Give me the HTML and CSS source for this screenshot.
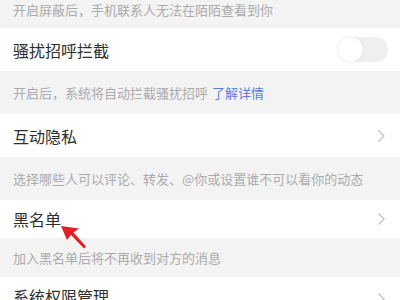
FILE: index.html
```html
<!DOCTYPE html>
<html lang="zh">
<head>
<meta charset="utf-8">
<link rel="stylesheet" href="styles.css">
</head>
<body>
<div class="page">
  <div class="note note-top">开启屏蔽后，手机联系人无法在陌陌查看到你</div>
  <div class="row row-tall">
    <span class="title">骚扰招呼拦截</span>
    <span class="toggle"><span class="knob"></span></span>
  </div>
  <div class="note note-tall">开启后，系统将自动拦截骚扰招呼 <a class="link">了解详情</a></div>
  <div class="row row-tall">
    <span class="title">互动隐私</span>
    <svg class="chev" width="9" height="14" viewBox="0 0 9 14"><path d="M1.5 1.5 L7 7 L1.5 12.5" fill="none" stroke="#c4c4c4" stroke-width="1.4"/></svg>
  </div>
  <div class="note note-tall">选择哪些人可以评论、转发、@你或设置谁不可以看你的动态</div>
  <div class="row row-short">
    <span class="title">黑名单</span>
    <svg class="chev" width="9" height="14" viewBox="0 0 9 14"><path d="M1.5 1.5 L7 7 L1.5 12.5" fill="none" stroke="#c4c4c4" stroke-width="1.4"/></svg>
  </div>
  <div class="note note-short">加入黑名单后将不再收到对方的消息</div>
  <div class="row row-last">
    <span class="title">系统权限管理</span>
    <svg class="chev" width="9" height="14" viewBox="0 0 9 14"><path d="M1.5 1.5 L7 7 L1.5 12.5" fill="none" stroke="#c4c4c4" stroke-width="1.4"/></svg>
  </div>
  <svg class="arrow" width="40" height="40" viewBox="0 0 40 40">
    <path d="M1 1 L19 3.5 L13.5 7.5 L26 21.5 L24 23.5 L11 10 L7 15 Z" fill="#e31e24"/>
  </svg>
</div>
</body>
</html>
```

FILE: styles.css
```css
html, body {
  margin: 0;
  padding: 0;
  background: #f3f3f3;
}
.page {
  position: relative;
  width: 400px;
  height: 300px;
  overflow: hidden;
  font-family: "Noto Sans CJK SC", "Noto Sans", sans-serif;
}
.note {
  display: flex;
  align-items: center;
  padding-left: 13px;
  font-size: 13px;
  color: #ababab;
  background: #f3f3f3;
  white-space: nowrap;
}
.note-top {
  height: 28px;
  align-items: flex-start;
  line-height: 20px;
}
.note-tall { height: 43px; }
.note-short { height: 39px; }
.link {
  color: #5a7ed8;
  margin-left: 4px;
}
.row {
  display: flex;
  align-items: center;
  justify-content: space-between;
  padding: 0 14px 0 13px;
  background: #fff;
}
.row-tall { height: 43px; }
.row-short { height: 38px; }
.row-last {
  height: 30px;
  align-items: flex-start;
  padding-top: 9px;
}
.row-last .chev { margin-top: 6px; }
.title {
  font-size: 16px;
  color: #2e2e2e;
  line-height: 20px;
}
.toggle {
  position: relative;
  width: 50px;
  height: 25px;
  border-radius: 13px;
  background: #efefef;
  margin-right: -2px;
}
.knob {
  position: absolute;
  left: 0;
  top: 0;
  width: 25px;
  height: 25px;
  border-radius: 50%;
  background: #fff;
  box-shadow: 0 0 2px rgba(0,0,0,0.14);
}
.chev { display: block; }
.arrow {
  position: absolute;
  left: 60px;
  top: 225px;
}
```
